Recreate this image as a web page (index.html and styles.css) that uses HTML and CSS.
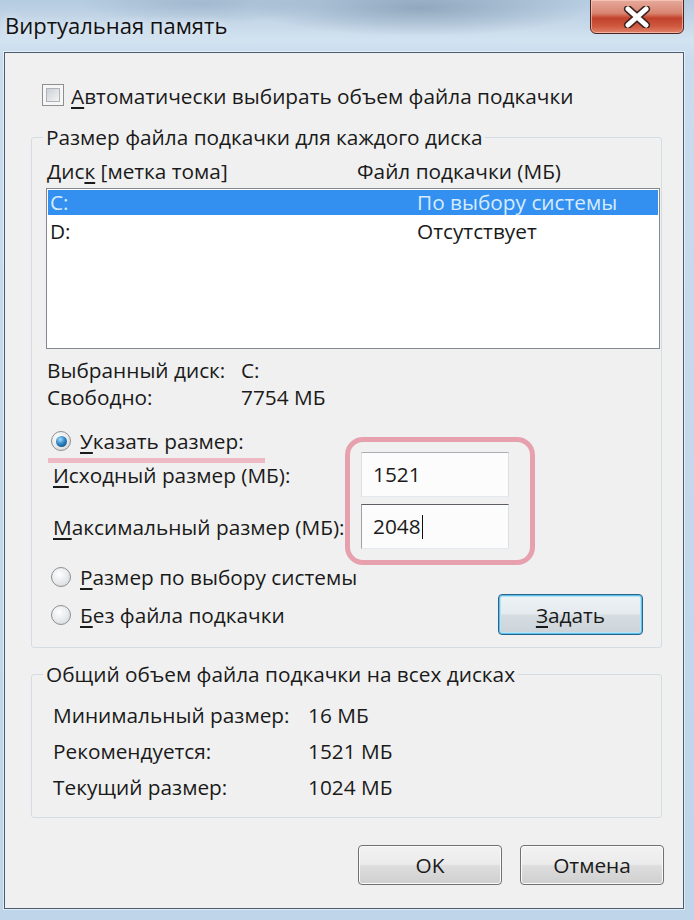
FILE: index.html
```html
<!DOCTYPE html>
<html lang="ru">
  <head>
    <meta charset="UTF-8" />
    <meta name="viewport" content="width=device-width, initial-scale=1.0" />
    <title>Виртуальная память</title>
    <link rel="stylesheet" href="styles.css">
  </head>
  <body>
    <div class="window">
      <div class="titlebar">
        <span class="title">Виртуальная память</span>
        <button class="close" aria-label="Закрыть">
          <svg width="28" height="22" viewBox="0 0 28 22">
            <path d="M5 3 L23 19 M23 3 L5 19" stroke="#3b2320" stroke-width="8" stroke-linecap="round" fill="none" />
            <path d="M5 3 L23 19 M23 3 L5 19" stroke="#ffffff" stroke-width="5" stroke-linecap="round" fill="none" />
          </svg>
        </button>
      </div>
      <div class="client">
        <label class="check-row"><span class="checkbox"></span><span><u>А</u>втоматически выбирать объем файла подкачки</span></label>

        <fieldset class="group">
          <legend>Размер файла подкачки для каждого диска</legend>
          <div class="list-head">
            <span>Дис<u>к</u> [метка тома]</span>
            <span>Файл подкачки (МБ)</span>
          </div>
          <div class="listbox">
            <div class="list-row selected"><span>C:</span><span>По выбору системы</span></div>
            <div class="list-row"><span>D:</span><span>Отсутствует</span></div>
          </div>
          <div class="info">
            <span>Выбранный диск:</span><span>C:</span>
            <span>Свободно:</span><span>7754 МБ</span>
          </div>
          <div class="radio-row marked"><span class="radio checked"></span><span><u>У</u>казать размер:</span></div>
          <div class="size-fields">
            <span><u>И</u>сходный размер (МБ):</span>
            <div class="textbox">1521</div>
            <span><u>М</u>аксимальный размер (МБ):</span>
            <div class="textbox focused">2048<span class="caret"></span></div>
            <div class="highlight"></div>
          </div>
          <div class="radio-row second"><span class="radio"></span><span><u>Р</u>азмер по выбору системы</span></div>
          <div class="radio-row last">
            <div class="radio-label"><span class="radio"></span><span><u>Б</u>ез файла подкачки</span></div>
            <button class="btn default"><u>З</u>адать</button>
          </div>
        </fieldset>

        <fieldset class="group total">
          <legend>Общий объем файла подкачки на всех дисках</legend>
          <div class="totals">
            <span>Минимальный размер:</span><span>16 МБ</span>
            <span>Рекомендуется:</span><span>1521 МБ</span>
            <span>Текущий размер:</span><span>1024 МБ</span>
          </div>
        </fieldset>

        <div class="dialog-buttons">
          <button class="btn">OK</button>
          <button class="btn">Отмена</button>
        </div>
      </div>
    </div>
  </body>
</html>
```

FILE: styles.css
```css
body {
  margin: 0;
  padding: 0;
  background-color: #c6d9eb;
  font-family: "Open Sans", "Noto Sans", sans-serif;
  font-size: 20.8px;
  color: #1a1a1a;
}
u {
  text-decoration-thickness: 1.5px;
  text-underline-offset: 3px;
}
.window {
  width: 694px;
  height: 920px;
  overflow: hidden;
  background:
    radial-gradient(ellipse 170px 28px at 420px 8px, rgba(110, 135, 160, 0.55), rgba(110, 135, 160, 0)),
    radial-gradient(ellipse 120px 20px at 200px 4px, rgba(130, 155, 180, 0.4), rgba(130, 155, 180, 0)),
    linear-gradient(180deg, #b5cbe0 0, #d2e2f0 40px, #c8dcee 60px, #bed5ea 100%);
}
.titlebar {
  height: 52px;
  display: flex;
  justify-content: space-between;
  align-items: flex-start;
}
.title {
  margin: 10px 0 0 5px;
  font-size: 22px;
  line-height: 30px;
  color: #111;
  text-shadow: 0 0 8px rgba(255, 255, 255, 0.8);
}
.close {
  width: 94px;
  height: 35px;
  margin: -1px 10px 0 0;
  padding: 0;
  border: 1px solid #4b2520;
  border-radius: 0 0 6px 6px;
  background: linear-gradient(180deg, #e6aa9c 0%, #d88570 40%, #c2412b 55%, #cf5a40 80%, #e0836a 100%);
  box-shadow: inset 0 0 0 1px rgba(255, 210, 200, 0.6);
  display: flex;
  align-items: center;
  justify-content: center;
}
.client {
  margin-left: 4px;
  width: 680px;
  box-sizing: border-box;
  border: 1px solid #4a5d70;
  box-shadow: 0 0 0 1px rgba(255, 255, 255, 0.5);
  background-color: #f0f0f0;
  padding: 30px 0 23px 0;
}
.check-row {
  display: flex;
  align-items: center;
  gap: 7px;
  margin-left: 37px;
  line-height: 26px;
}
.checkbox {
  width: 22px;
  height: 22px;
  box-sizing: border-box;
  border: 1px solid #8e8f8f;
  background: #f6f6f6;
  padding: 3px;
  margin-top: -2px;
}
.checkbox::before {
  content: "";
  display: block;
  width: 100%;
  height: 100%;
  box-sizing: border-box;
  border: 1px solid #aeb3b9;
  background: linear-gradient(135deg, #cbcfd5 0%, #f4f4f4 100%);
}
.group {
  width: 631px;
  box-sizing: border-box;
  margin: 15px 0 0 26px;
  padding: 0 1px 12px 14px;
  border: 1px solid #d3dce2;
  border-radius: 3px;
  min-inline-size: 0;
}
.group legend {
  padding: 0 3px;
  margin-left: -3px;
  line-height: 26px;
}
.list-head {
  display: grid;
  grid-template-columns: 310px auto;
  margin-top: 8px;
  padding-left: 1px;
  line-height: 26px;
}
.listbox {
  margin-top: 4px;
  width: 614px;
  height: 161px;
  box-sizing: border-box;
  border: 1px solid #828790;
  background-color: #ffffff;
  padding: 1px;
}
.list-row {
  display: grid;
  grid-template-columns: 367px auto;
  height: 25px;
  line-height: 25px;
  padding-left: 2px;
}
.list-row + .list-row {
  margin-top: 4px;
}
.list-row.selected {
  background-color: #3390f0;
  color: #d6ebff;
}
.info {
  display: grid;
  grid-template-columns: 194px auto;
  margin: 8px 0 0 1px;
  line-height: 27px;
}
.radio-row {
  display: flex;
  align-items: center;
  gap: 9px;
  margin-left: 5px;
  line-height: 26px;
}
.radio-row.marked {
  margin-top: 17px;
  position: relative;
}
.radio-row.marked::after {
  content: "";
  position: absolute;
  left: -3px;
  bottom: -9px;
  width: 217px;
  height: 5px;
  background-color: rgba(232, 120, 140, 0.45);
}
.radio-row.second {
  margin-top: 15px;
}
.radio-row.last {
  margin-top: 4px;
  margin-right: 17px;
  justify-content: space-between;
}
.radio-label {
  display: flex;
  align-items: center;
  gap: 9px;
}
.radio {
  width: 20px;
  height: 20px;
  box-sizing: border-box;
  border-radius: 50%;
  border: 1px solid #8e8f8f;
  background: radial-gradient(circle at 40% 35%, #ffffff 0%, #e6e8eb 55%, #cdd1d6 100%);
  display: flex;
  align-items: center;
  justify-content: center;
}
.radio.checked::before {
  content: "";
  width: 11px;
  height: 11px;
  border-radius: 50%;
  background: radial-gradient(circle at 38% 32%, #a6dcff 0%, #2f86c4 45%, #0d3f66 100%);
}
.size-fields {
  position: relative;
  display: grid;
  grid-template-columns: 308px 148px;
  row-gap: 7px;
  align-items: center;
  margin: -2px 0 0 7px;
}
.textbox {
  height: 45px;
  box-sizing: border-box;
  border: 1px solid #dbdfe6;
  border-top-color: #abadb3;
  border-bottom-color: #e3e9ef;
  background-color: #fcfcfc;
  padding-left: 11px;
  line-height: 43px;
  display: flex;
  align-items: center;
}
.textbox.focused {
  border-top-color: #5b5e63;
  border-left-color: #9fa2a8;
}
.caret {
  width: 1.5px;
  height: 24px;
  background-color: #111;
  margin-left: 1px;
}
.highlight {
  position: absolute;
  left: 292px;
  top: -15px;
  width: 190px;
  height: 128px;
  box-sizing: border-box;
  border: 5px solid rgba(228, 140, 158, 0.8);
  border-radius: 18px;
}
.btn {
  width: 144px;
  height: 40px;
  padding: 0;
  font-family: inherit;
  font-size: 20.8px;
  color: #1a1a1a;
  border: 1px solid #707070;
  border-radius: 4px;
  background: linear-gradient(180deg, #f2f2f2 0%, #ebebeb 48%, #dddddd 52%, #cfcfcf 100%);
  box-shadow: inset 0 0 0 1px #fbfbfb;
}
.btn.default {
  width: 145px;
  height: 41px;
  border-color: #2c628b;
  background: linear-gradient(180deg, #eef3f6 0%, #e4eaee 48%, #d6dde2 52%, #cbd3d9 100%);
  box-shadow: inset 0 0 0 1px #5fc1e8, inset 0 0 0 2px #b5e4f5;
}
.group.total {
  margin-top: 13px;
  padding-bottom: 17px;
}
.totals {
  display: grid;
  grid-template-columns: 255px auto;
  row-gap: 10px;
  margin: 15px 0 0 7px;
  line-height: 26px;
}
.dialog-buttons {
  display: flex;
  justify-content: flex-end;
  gap: 18px;
  margin-top: 27px;
  padding-right: 19px;
}
```
